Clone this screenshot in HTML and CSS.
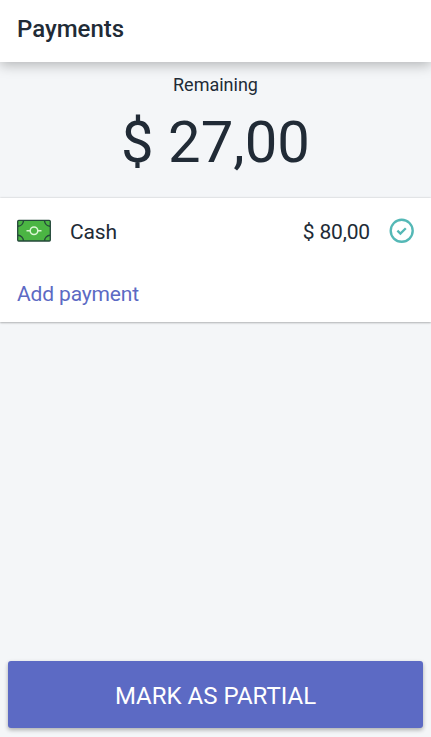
FILE: index.html
```html
<!DOCTYPE html>
<html lang="en">
<head>
    <meta charset="UTF-8">
    <meta name="viewport" content="width=device-width, initial-scale=1.0">
    <title>Payments</title>
    <link rel="stylesheet" href="styles.css">
</head>
<body>

    <header class="header">
        <h1>Payments</h1>
    </header>

    <section class="remaining">
        <div class="remaining-label">Remaining</div>
        <div class="remaining-amount">$ 27,00</div>
    </section>

    <section class="payments">
        <div class="payment">
            <!-- Banknote -->
            <svg class="cash-icon" width="36" height="24" viewBox="0 0 36 24" fill="none">
                <rect x="1.7" y="1.4" width="32.6" height="20.6" rx="1" fill="#4bb543" stroke="#24483a" stroke-width="1.3"/>
                <path d="M7.5 1.7A6 6 0 0 1 2 7.2M28.5 1.7A6 6 0 0 0 34 7.2M2 16.2A6 6 0 0 1 7.5 21.7M34 16.2A6 6 0 0 0 28.5 21.7" stroke="#24483a" stroke-width="1.4"/>
                <circle cx="18" cy="11.7" r="3.8" stroke="#dcf7d4" stroke-width="1.5"/>
                <path d="M10.5 11.7h3.7M21.8 11.7h3.7" stroke="#dcf7d4" stroke-width="1.5"/>
            </svg>
            <span class="payment-name">Cash</span>
            <span class="payment-amount">$ 80,00</span>
            <!-- Paid -->
            <svg class="check-icon" width="26" height="26" viewBox="0 0 26 26" fill="none" stroke="#54b8b6">
                <circle cx="12.7" cy="12.8" r="11" stroke-width="2.4"/>
                <path d="M8.4 12.7l3 2.9 5.4-5.4" stroke-width="2.3"/>
            </svg>
        </div>
        <a class="add-payment">Add payment</a>
    </section>

    <footer class="footer">
        <button class="partial-button">MARK AS PARTIAL</button>
    </footer>

</body>
</html>
```
FILE: styles.css
```css
/* General Styles */
* {
    box-sizing: border-box;
}

body {
    display: flex;
    flex-direction: column;
    height: 100vh;
    margin: 0;
    font-family: Roboto, sans-serif;
    background-color: #f4f6f8;
    color: #212b36;
}

.header {
    position: relative;
    height: 62px;
    padding: 14px 17px 0;
    background-color: #fff;
    box-shadow: 0 3px 12px rgba(0, 0, 0, 0.27);
}

h1 {
    margin: 0;
    font-size: 24px;
    font-weight: 500;
    line-height: 30px;
}

/* Remaining total */
.remaining {
    height: 136px;
    padding-top: 12px;
    text-align: center;
}

.remaining-label {
    font-size: 18px;
    line-height: 22px;
}

.remaining-amount {
    margin-top: 10px;
    font-size: 58px;
    line-height: 72px;
}

/* Payment list */
.payments {
    height: 124px;
    background-color: #fff;
    box-shadow: 0 0 2px rgba(0, 0, 0, 0.18), 0 1px 2px rgba(0, 0, 0, 0.22);
}

.payment {
    display: flex;
    align-items: center;
    height: 66px;
    padding: 0 16px;
    font-size: 21px;
    letter-spacing: -0.15px;
}

.payment-name,
.payment-amount {
    padding-top: 2px;
}

.payment-name {
    margin-left: 18px;
}

.payment-amount {
    margin-left: auto;
    margin-right: 19px;
}

.add-payment {
    display: block;
    padding: 17px 17px 0;
    font-size: 21px;
    line-height: 26px;
    letter-spacing: -0.15px;
    color: #5c6ac4;
}

/* Bottom action */
.footer {
    margin-top: auto;
    padding: 0 8px 9px;
}

.partial-button {
    display: block;
    width: 100%;
    height: 67px;
    padding: 2px 0 0;
    border: none;
    border-radius: 3px;
    background-color: #5c6ac4;
    color: #fff;
    font-family: inherit;
    font-size: 24px;
    box-shadow: 0 2px 4px rgba(0, 0, 0, 0.3);
}
```
